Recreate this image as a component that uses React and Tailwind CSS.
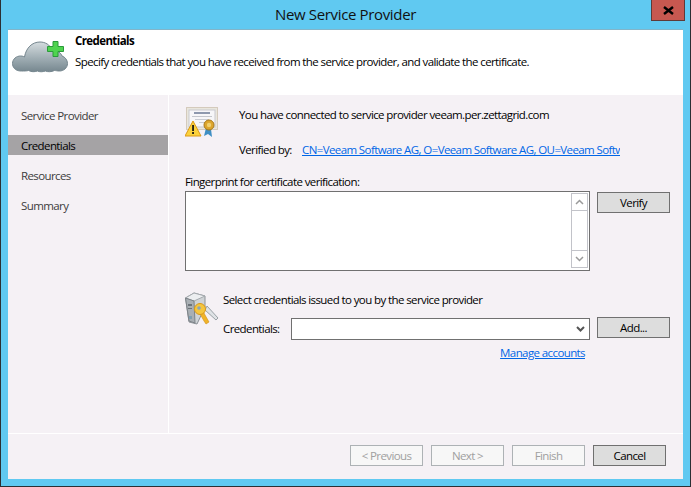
function CloudIcon() {
  return (
    <svg width="56" height="32" viewBox="0 0 56 32" className="block">
      <defs>
        <linearGradient id="cloud-fill" x1="0" y1="0" x2="0" y2="1">
          <stop offset="0" stopColor="#d5dcdf" />
          <stop offset="0.55" stopColor="#9fadb3" />
          <stop offset="1" stopColor="#76878f" />
        </linearGradient>
      </defs>
      <path d="M9 30C3 30 0.500 26 0.500 22.500c0-4.500 4-7.500 8-7.500 2 0 3 .5 4 1C14 7 20 1 28 1c5 0 10 2.500 12 8 6 .5 9 3 10 6 3 1 5.500 4 5.500 7.500 0 4.500-4 7.500-8 7.500-2 0-4-.5-5-.5-3 1.500-7 1.500-9 .5-3 1-6 1-8 0-3 1-6 1-9-.5-2 .5-4 .5-7 .5z" fill="url(#cloud-fill)" stroke="#75868e" strokeWidth="1" />
      <path d="M41 0.500h5v5h5.500v5H46v5h-5v-5h-5.500v-5H41z" fill="#4fd44f" stroke="#2a9a3a" strokeWidth="1" />
    </svg>
  )
}

function CertIcon() {
  return (
    <svg width="34" height="30" viewBox="0 0 34 30" className="block">
      <rect x="1.500" y="0.500" width="31" height="22" fill="#e9e6dd" stroke="#b8a98e" strokeDasharray="1 1" />
      <rect x="4" y="3" width="26" height="17" fill="#f6f6f8" stroke="#c9c9cf" />
      <rect x="9" y="5" width="16" height="2" fill="#8d98ad" />
      <rect x="7" y="9" width="20" height="1" fill="#c3c6cc" />
      <rect x="10" y="12" width="14" height="1" fill="#c9ccd2" />
      <rect x="14" y="15" width="8" height="1" fill="#c9ccd2" />
      <path d="M21 21l-2 8 4-2 4 3-1-8z" fill="#3f8fc4" />
      <circle cx="24" cy="18" r="5" fill="#dca52b" stroke="#a8791a" />
      <circle cx="24" cy="18" r="2.200" fill="#f0cf6c" />
      <path d="M8 14L16 29H0z" fill="#fbd23c" stroke="#dd9a17" />
      <rect x="7.200" y="18" width="1.700" height="6" fill="#111" />
      <rect x="7.200" y="25" width="1.700" height="2" fill="#111" />
    </svg>
  )
}

function ServerKeyIcon() {
  return (
    <svg width="36" height="34" viewBox="0 0 36 34" className="block">
      <path d="M0.500 6L9 1l11 3v11l-8 17-8-2z" fill="#cfd3d6" stroke="#8c9297" />
      <path d="M0.500 6L9 9l11-5L9 1z" fill="#eceef0" stroke="#a5aaae" />
      <path d="M0.500 6L9 9l1 22-6-2z" fill="#a9afb4" stroke="#7d8388" />
      <rect x="3" y="12" width="4" height="2" fill="#6d747a" />
      <rect x="3" y="16" width="4" height="1" fill="#6d747a" />
      <rect x="4" y="24" width="3" height="3" fill="#7f9fb0" />
      <path d="M22 14l11 12-2 2-11-10z" fill="#dfe3e6" stroke="#9aa1a6" />
      <path d="M14 20l5 9 2 3 3-2-4-7-2-4z" fill="#f0b429" stroke="#d18f14" strokeWidth="0.600" />
      <circle cx="15" cy="17" r="5.500" fill="#f5c63e" stroke="#d8981a" />
      <circle cx="14" cy="16" r="1.800" fill="#8aa4b8" />
    </svg>
  )
}

function Chevron({ up }) {
  return (
    <svg width="9" height="6" viewBox="0 0 9 6" className="block">
      <path d={up ? 'M1 5l3.500-3.500L8 5' : 'M1 1l3.500 3.500L8 1'} fill="none" stroke="#9a9a9a" strokeWidth="1.500" />
    </svg>
  )
}

function WizardButton({ children, disabled, className = '' }) {
  const look = disabled
    ? 'border-[#adb2b5] bg-[#f7f7f7] text-[#a0a0a0]'
    : 'border-[#707070] bg-[#dddddd] text-black'
  return (
    <div className={`flex h-[21px] w-[73px] items-center justify-center border ${look} ${className}`}>
      {children}
    </div>
  )
}

function NavItem({ label, active }) {
  return (
    <div className={`flex h-5 items-center pt-[1px] pl-[13px] ${active ? 'bg-[#a5a3a5] text-black' : 'text-[#3c3c3c]'}`}>
      {label}
    </div>
  )
}

export default function App() {
  const steps = ['Service Provider', 'Credentials', 'Resources', 'Summary']
  return (
    <div className="flex h-[487px] w-[691px] flex-col overflow-hidden border-r border-b border-l border-[#2b2f33] bg-[#60c9f1] font-['Open_Sans','Liberation_Sans',sans-serif] text-[11.5px] tracking-[-0.6px] text-black">
      <div className="relative flex h-[29px] shrink-0 justify-center pt-[4px] text-[15px] leading-5 tracking-[-0.35px] text-[#111]">
        New Service Provider
        <div className="absolute top-0 right-[5px] flex h-[21px] w-[34px] items-center justify-center border border-t-0 border-[#5f3a38] bg-[#c75850]">
          <svg width="11" height="9" viewBox="0 0 11 9">
            <path d="M1 1l9 7M10 1L1 8" stroke="#000" strokeWidth="2.400" />
          </svg>
        </div>
      </div>

      <div className="mx-[7px] flex flex-1 flex-col border-t border-[#82b5c9] bg-[#f5f1f5]">
        <div className="flex h-[65px] shrink-0 bg-white pt-[11px] pl-[4px]">
          <div className="w-[63px]">
            <CloudIcon />
          </div>
          <div className="-mt-[8px]">
            <div className="leading-[16px] font-bold">Credentials</div>
            <div className="mt-[5px] leading-[16px]">
              Specify credentials that you have received from the service provider, and validate the certificate.
            </div>
          </div>
        </div>

        <div className="flex flex-1">
          <div className="flex w-[160px] shrink-0 flex-col gap-[10px] pt-[10px]">
            {steps.map((s) => (
              <NavItem key={s} label={s} active={s === 'Credentials'} />
            ))}
          </div>

          <div className="flex-1 border-l border-white pr-[13px] pl-[16px]">
            <div className="flex pt-[12px]">
              <div className="w-[54px] shrink-0">
                <CertIcon />
              </div>
              <div className="min-w-0 flex-1">
                <div className="leading-[16px]">You have connected to service provider veeam.per.zettagrid.com</div>
                <div className="mt-[19px] flex leading-[16px]">
                  <span className="w-[63px] shrink-0">Verified by:</span>
                  <a className="w-[318px] overflow-hidden whitespace-nowrap text-[#0066e6] underline">
                    CN=Veeam Software AG, O=Veeam Software AG, OU=Veeam Software
                  </a>
                </div>
              </div>
            </div>

            <div className="mt-[16px] leading-[16px]">Fingerprint for certificate verification:</div>
            <div className="mt-[1px] flex gap-[7px]">
              <div className="flex h-[80px] w-[405px] justify-end border border-[#707070] bg-white pt-[1px] pr-[1px] pb-[2px]">
                <div className="flex w-[17px] flex-col justify-between border border-[#c2c3c9] bg-white">
                  <div className="flex h-[17px] items-center justify-center border-b border-[#c2c3c9]">
                    <Chevron up />
                  </div>
                  <div className="flex h-[17px] items-center justify-center border-t border-[#c2c3c9]">
                    <Chevron />
                  </div>
                </div>
              </div>
              <WizardButton className="mt-[1px]">Verify</WizardButton>
            </div>

            <div className="mt-[21px] flex">
              <div className="w-[38px] shrink-0">
                <ServerKeyIcon />
              </div>
              <div className="flex-1">
                <div className="leading-[16px]">Select credentials issued to you by the service provider</div>
                <div className="mt-[9px] flex items-start gap-[7px]">
                  <span className="mt-[4px] w-[61px] shrink-0 leading-[16px]">Credentials:</span>
                  <div className="mt-[1px] flex h-[22px] w-[299px] items-center justify-end border border-[#707070] bg-white pr-[4px]">
                    <svg width="9" height="6" viewBox="0 0 9 6">
                      <path d="M1 1l3.500 3.500L8 1" fill="none" stroke="#555" strokeWidth="2" />
                    </svg>
                  </div>
                  <WizardButton>Add...</WizardButton>
                </div>
                <div className="mt-[5px] w-[362px] text-right leading-[16px] text-[#0066e6] underline">Manage accounts</div>
              </div>
            </div>
          </div>
        </div>

        <div className="flex h-[46px] shrink-0 justify-end gap-[8px] border-t border-white pt-[11px] pr-[17px]">
          <WizardButton disabled>&lt; Previous</WizardButton>
          <WizardButton disabled>Next &gt;</WizardButton>
          <WizardButton disabled>Finish</WizardButton>
          <WizardButton>Cancel</WizardButton>
        </div>
      </div>
      <div className="h-[7px] shrink-0" />
    </div>
  )
}
